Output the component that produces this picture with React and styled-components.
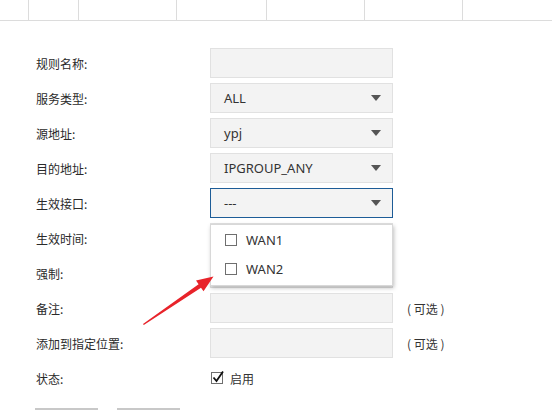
import React from "react";
import styled, { createGlobalStyle } from "styled-components";

const Global = createGlobalStyle`
  html, body { margin: 0; padding: 0; background: #fff; }
  body {
    font-family: "Noto Sans", "Noto Sans CJK SC", sans-serif;
    color: #333;
    overflow: hidden;
    width: 552px;
    height: 410px;
  }
`;

const Page = styled.div`
  position: relative;
  width: 552px;
  height: 410px;
  overflow: hidden;
`;

const HeaderRow = styled.div`
  display: grid;
  grid-template-columns: 28px 50px 98px 90px 98px 98px 1fr;
  height: 20px;
  border-bottom: 1px solid #dcdcdc;
`;

const HeaderCell = styled.div`
  border-left: ${(p) => (p.$first ? "none" : "1px solid #dcdcdc")};
`;

const Form = styled.div`
  display: grid;
  grid-template-columns: 174px 183px auto;
  grid-auto-rows: 30px;
  row-gap: 5px;
  padding: 27px 0 0 36px;
  align-items: center;
`;

const Label = styled.div`
  font-family: "Noto Sans CJK SC", sans-serif;
  font-size: 12px;
  color: #2a2a2a;
`;

const FieldWrap = styled.div`
  position: relative;
  height: 30px;
`;

const Field = styled.div`
  box-sizing: border-box;
  height: 30px;
  width: 183px;
  background: #f3f3f3;
  border: 1px solid ${(p) => (p.$active ? "#1d5c97" : "#e1e1e1")};
  display: flex;
  align-items: center;
  justify-content: space-between;
  padding: 0 11px 0 13px;
  font-size: 13px;
  color: #333;
`;

const Caret = styled.span`
  width: 0;
  height: 0;
  border-left: 5px solid transparent;
  border-right: 5px solid transparent;
  border-top: 6px solid #555;
`;

const Note = styled.div`
  font-family: "Noto Sans CJK SC", sans-serif;
  font-size: 12px;
  color: #333;
  padding-left: 14px;
  white-space: pre;
`;

const Menu = styled.div`
  position: absolute;
  top: 36px;
  left: 0;
  width: 181px;
  height: 60px;
  background: #fff;
  border: 1px solid #d8d8d8;
  box-shadow: 1px 2px 4px rgba(0, 0, 0, 0.25);
  z-index: 5;
  display: flex;
  flex-direction: column;
`;

const MenuItem = styled.div`
  height: 29px;
  display: flex;
  align-items: center;
  padding-left: 14px;
  gap: 9px;
  font-size: 13px;
  color: #333;
`;

const Box = styled.span`
  box-sizing: border-box;
  width: 12px;
  height: 12px;
  border: 1px solid #6f6f6f;
  background: #fff;
  display: inline-flex;
  align-items: center;
  justify-content: center;
  position: relative;
`;

const Check = styled.div`
  display: flex;
  align-items: center;
  gap: 7px;
  font-family: "Noto Sans CJK SC", sans-serif;
  font-size: 12px;
  padding-left: 1px;
`;

const Buttons = styled.div`
  display: flex;
  gap: 19px;
  padding: 15px 0 0 35px;
`;

const Btn = styled.div`
  width: 63px;
  height: 30px;
  border-top: 2px solid #c8c8c8;
  background: #f3f3f3;
  box-sizing: border-box;
`;

const Arrow = styled.svg`
  position: absolute;
  left: 140px;
  top: 274px;
  z-index: 6;
`;

const rows = [
  { label: "规则名称:", value: "", caret: false },
  { label: "服务类型:", value: "ALL", caret: true },
  { label: "源地址:", value: "ypj", caret: true },
  { label: "目的地址:", value: "IPGROUP_ANY", caret: true },
];

export default function App() {
  const cols = [0, 1, 2, 3, 4, 5, 6];
  return (
    <Page>
      <Global />
      <HeaderRow>
        {cols.map((c) => (
          <HeaderCell key={c} $first={c === 0} />
        ))}
      </HeaderRow>
      <Form>
        {rows.map((r) => (
          <React.Fragment key={r.label}>
            <Label>{r.label}</Label>
            <Field>
              <span>{r.value}</span>
              {r.caret && <Caret />}
            </Field>
            <div />
          </React.Fragment>
        ))}
        <Label>生效接口:</Label>
        <FieldWrap>
          <Field $active>
            <span>---</span>
            <Caret />
          </Field>
          <Menu>
            <MenuItem>
              <Box />
              WAN1
            </MenuItem>
            <MenuItem>
              <Box />
              WAN2
            </MenuItem>
          </Menu>
        </FieldWrap>
        <div />
        <Label>生效时间:</Label>
        <Field />
        <div />
        <Label>强制:</Label>
        <Field />
        <div />
        <Label>备注:</Label>
        <Field />
        <Note>{"( 可选 )"}</Note>
        <Label>添加到指定位置:</Label>
        <Field />
        <Note>{"( 可选 )"}</Note>
        <Label>状态:</Label>
        <Check>
          <Box>
            <svg width="13" height="14" viewBox="0 0 13 14" style={{ position: "absolute", left: 0, top: -3 }}>
              <path d="M1.5 7.5 L4.5 11 L11 1.5" fill="none" stroke="#111" strokeWidth="1.8" />
            </svg>
          </Box>
          启用
        </Check>
        <div />
      </Form>
      <Buttons>
        <Btn />
        <Btn />
      </Buttons>
      <Arrow width="80" height="56" viewBox="0 0 80 56">
        <path d="M3 50 L58.6 10.2 L56 6.5 L73.5 2.5 L63.5 17.2 L61 13.8 L3.8 51 Z" fill="#e8232a" />
      </Arrow>
    </Page>
  );
}
